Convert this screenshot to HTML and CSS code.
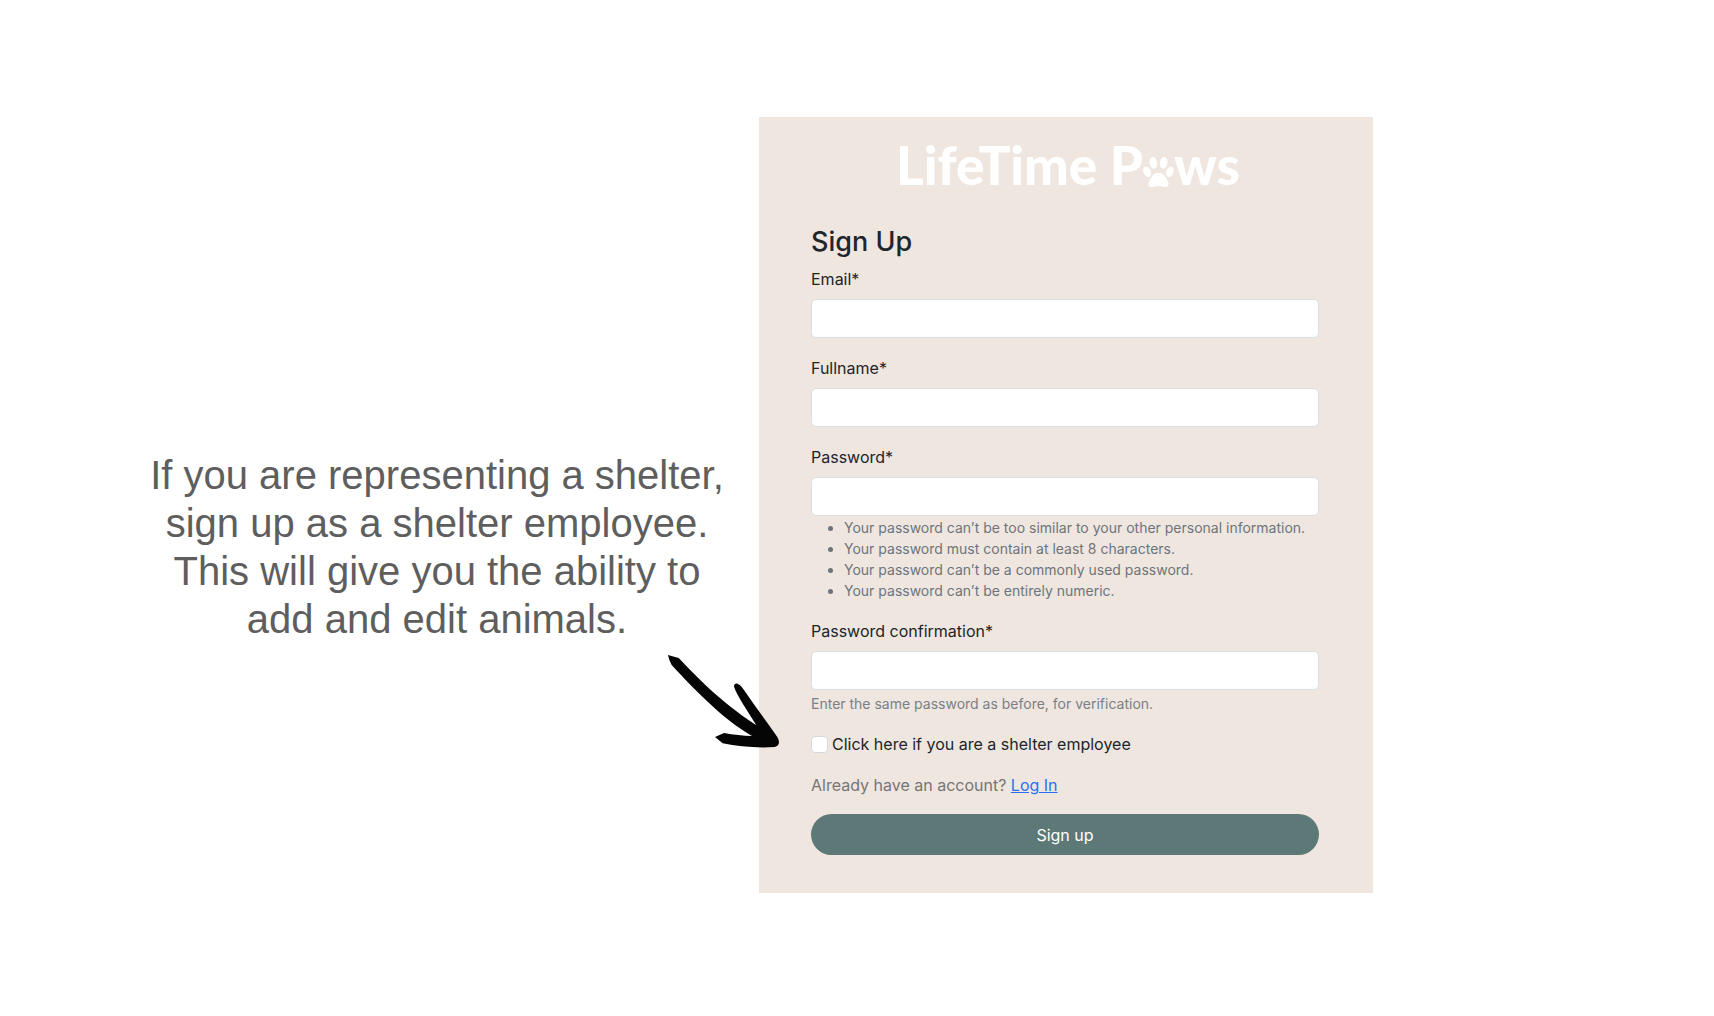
FILE: index.html
```html
<!DOCTYPE html>
<html lang="en">
<head>
<meta charset="utf-8">
<meta name="viewport" content="width=device-width, initial-scale=1">
<title>LifeTime Paws – Sign Up</title>
<link rel="stylesheet" href="styles.css">
</head>
<body>
<main class="page">
  <p class="caption">If you are representing a shelter,<br>sign up as a shelter employee.<br>This will give you the ability to<br>add and edit animals.</p>
  <section class="card">
    <svg class="arrow" viewBox="0 0 450 375" aria-hidden="true">
      <path d="M54 45 L86 54 C140 110 205 180 319 256 C295 215 262 170 252 140 Q252 129 263 131 Q271 135 276 142 C310 192 345 238 382 291 Q395 315 374 321 C320 325 265 319 218 310 L195 291 L222 279 C250 284 280 288 306 288 C215 235 130 145 65 75 Q57 61 54 45Z"/>
    </svg>
    <div class="logo">
      <span>LifeTime P</span>
      <svg class="paw" viewBox="0 0 90 90" role="img" aria-label="a">
        <ellipse cx="12" cy="43" rx="10.500" ry="16" transform="rotate(-24 12 43)"/>
        <ellipse cx="30" cy="17" rx="11" ry="17" transform="rotate(-10 30 17)"/>
        <ellipse cx="60" cy="17" rx="11" ry="17" transform="rotate(10 60 17)"/>
        <ellipse cx="78" cy="43" rx="10.500" ry="16" transform="rotate(24 78 43)"/>
        <path d="M45 46 C60 46 67 60 72 70 C78 82 72 89 62 87 C51 83 39 83 28 87 C18 89 12 82 18 70 C23 60 30 46 45 46Z"/>
      </svg>
      <span>ws</span>
    </div>
    <form class="form">
      <h1 class="title">Sign Up</h1>
      <div class="field">
        <label class="label" for="email">Email*</label>
        <input class="input" id="email" type="email">
      </div>
      <div class="field">
        <label class="label" for="fullname">Fullname*</label>
        <input class="input" id="fullname" type="text">
      </div>
      <div class="field">
        <label class="label" for="password">Password*</label>
        <input class="input" id="password" type="password">
        <ul class="rules">
          <li>Your password can’t be too similar to your other personal information.</li>
          <li>Your password must contain at least 8 characters.</li>
          <li>Your password can’t be a commonly used password.</li>
          <li>Your password can’t be entirely numeric.</li>
        </ul>
      </div>
      <div class="field">
        <label class="label" for="confirm">Password confirmation*</label>
        <input class="input" id="confirm" type="password">
        <p class="help">Enter the same password as before, for verification.</p>
      </div>
      <div class="check">
        <input class="box" id="employee" type="checkbox">
        <label for="employee">Click here if you are a shelter employee</label>
      </div>
      <p class="login">Already have an account? <a href="#">Log In</a></p>
      <button class="submit" type="submit">Sign up</button>
    </form>
  </section>
</main>
</body>
</html>
```
FILE: styles.css
```css
* {
  box-sizing: border-box;
}

body {
  margin: 0;
  background: #fff;
  color: #212529;
  font: 16px/24px Inter, "Liberation Sans", sans-serif;
}

.page {
  display: grid;
  grid-template-columns: minmax(0, 644fr) minmax(0, 614fr);
  align-items: start;
  padding: 117px 341px 117px 115px;
}

.caption {
  margin: 334px 0 0;
  color: #5e5e5e;
  font: 40px/48px "Liberation Sans", sans-serif;
  text-align: center;
  white-space: nowrap;
}

.card {
  position: relative;
  padding: 20px 54px 38px 52px;
  background: #efe6e0;
}

.arrow {
  position: absolute;
  top: 523px;
  left: -109px;
  width: 150px;
  height: 125px;
  fill: #050505;
}

.logo {
  display: flex;
  justify-content: center;
  align-items: center;
  height: 56px;
  padding-left: 6px;
  color: #fff;
  font: 900 53px/56px Lato, sans-serif;
}

.paw {
  width: 31px;
  height: 31px;
  margin-top: 14px;
  fill: #fff;
}

.title {
  margin: 32px 0 8px;
  font-size: 27px;
  line-height: 34px;
  font-weight: 500;
}

.field {
  margin-bottom: 18px;
}

.label {
  display: block;
  margin-bottom: 8px;
}

.input {
  display: block;
  width: 100%;
  height: 39px;
  padding: 6px 12px;
  border: 1px solid #dadfe3;
  border-radius: 5px;
  background: #fff;
  font: inherit;
}

.rules {
  margin: 1px 0 0;
  padding-left: 33px;
  color: #6c757d;
  font-size: 14px;
  line-height: 21px;
}

.help {
  margin: 4px 0 0;
  color: #7b8085;
  font-size: 14px;
  line-height: 20px;
}

.check {
  display: flex;
  align-items: center;
  gap: 4px;
}

.box {
  appearance: none;
  width: 17px;
  height: 17px;
  margin: 0;
  border: 1px solid #d5d9dd;
  border-radius: 4px;
  background: #fff;
}

.box:checked {
  background: #5c7978;
}

.login {
  margin: 17px 0;
  color: #757575;
}

.login a {
  color: #2b6ff3;
}

.submit {
  display: block;
  width: 100%;
  height: 41px;
  border: 0;
  border-radius: 21px;
  background: #5c7978;
  color: #fff;
  font: inherit;
}
```
